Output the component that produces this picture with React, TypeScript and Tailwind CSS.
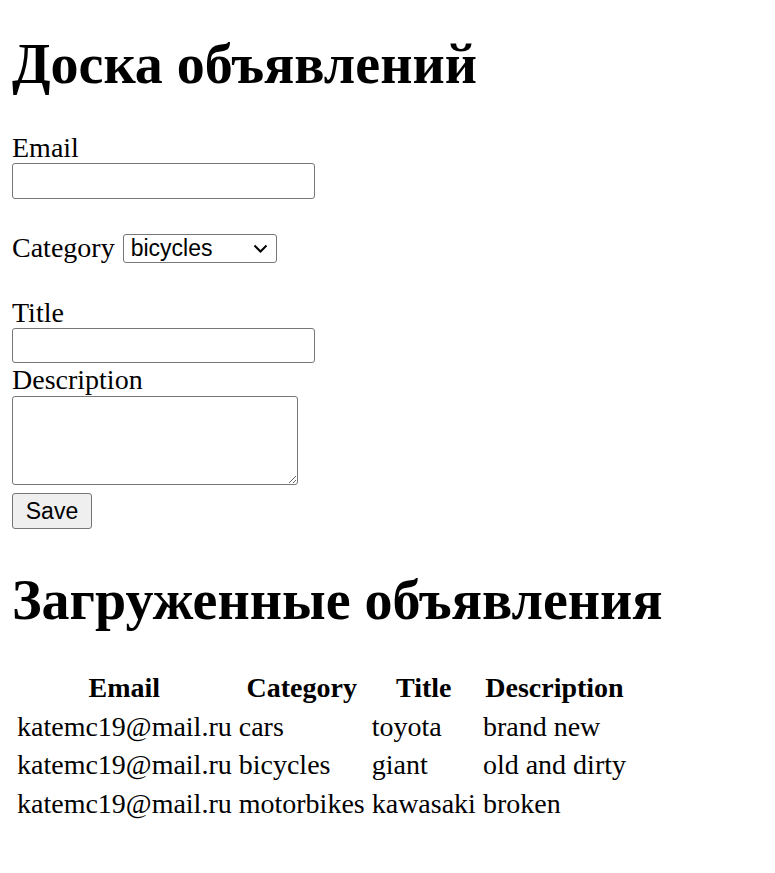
import React from "react";

export default function App() {
  const rows = [
    ["katemc19@mail.ru", "cars", "toyota", "brand new"],
    ["katemc19@mail.ru", "bicycles", "giant", "old and dirty"],
    ["katemc19@mail.ru", "motorbikes", "kawasaki", "broken"],
  ];
  return (
    <div className="min-h-[873px] bg-white pl-[12px] font-['Liberation_Serif','Times_New_Roman',serif] text-[28px] text-black">
      <h1 className="pt-[33px] text-[56px] font-bold leading-[63px] h-[96px]">Доска объявлений</h1>
      <form onSubmit={(e) => e.preventDefault()}>
        <div className="mt-[36px] h-[31px] leading-[31px]">Email</div>
        <input
          type="text"
          className="block h-[36px] w-[303px] rounded-[3px] border border-[#767676] bg-white px-[3px] font-['Liberation_Sans',Arial,sans-serif] text-[23px] outline-none"
        />
        <div className="mt-[33px] flex h-[31px] items-end gap-[8px]">
          <span className="leading-[31px]">Category</span>
          <div className="relative">
            <select
              defaultValue="bicycles"
              className="block h-[29px] w-[154px] appearance-none rounded-[3px] border border-[#767676] bg-white pl-[7px] font-['Liberation_Sans',Arial,sans-serif] text-[23px] leading-[27px] text-black outline-none"
            >
              <option value="cars">cars</option>
              <option value="bicycles">bicycles</option>
              <option value="motorbikes">motorbikes</option>
            </select>
            <svg
              className="pointer-events-none absolute right-[9px] top-[10px]"
              width="15"
              height="9"
              viewBox="0 0 15 9"
              fill="none"
            >
              <path d="M1.5 1.5 L7.5 7.5 L13.5 1.5" stroke="#000" strokeWidth="2" />
            </svg>
          </div>
        </div>
        <div className="mt-[34px] h-[31px] leading-[31px]">Title</div>
        <input
          type="text"
          className="block h-[35px] w-[303px] rounded-[3px] border border-[#767676] bg-white px-[3px] font-['Liberation_Sans',Arial,sans-serif] text-[23px] outline-none"
        />
        <div className="h-[33px] leading-[33px]">Description</div>
        <textarea className="block h-[89px] w-[286px] rounded-[3px] border border-[#767676] bg-white font-['Liberation_Sans',Arial,sans-serif] text-[23px] outline-none" />
        <button
          type="submit"
          className="mt-[8px] flex h-[36px] w-[80px] items-center justify-center rounded-[3px] border border-[#767676] bg-[#efefef] font-['Liberation_Sans',Arial,sans-serif] text-[23px] leading-[27px] text-black"
        >
          Save
        </button>
      </form>
      <h2 className="mt-[40px] text-[56px] font-bold leading-[63px]">Загруженные объявления</h2>
      <table className="mt-[35px] border-separate border-spacing-[3px]">
        <thead>
          <tr>
            <th className="px-[2px] py-[2px] text-center font-bold leading-[31.5px]">Email</th>
            <th className="px-[2px] py-[2px] text-center font-bold leading-[31.5px]">Category</th>
            <th className="px-[2px] py-[2px] text-center font-bold leading-[31.5px]">Title</th>
            <th className="px-[2px] py-[2px] text-center font-bold leading-[31.5px]">Description</th>
          </tr>
        </thead>
        <tbody>
          {rows.map((r, i) => (
            <tr key={i}>
              {r.map((c, j) => (
                <td key={j} className="px-[2px] py-[2px] text-left leading-[31.5px]">
                  {c}
                </td>
              ))}
            </tr>
          ))}
        </tbody>
      </table>
    </div>
  );
}
